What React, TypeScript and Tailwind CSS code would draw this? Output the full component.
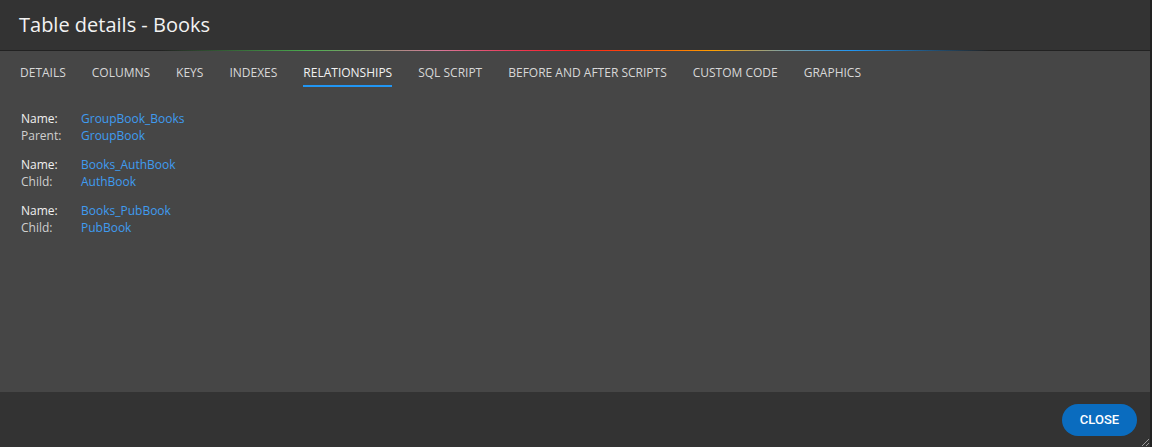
import type { ReactNode } from 'react';

const tabs = [
  'DETAILS',
  'COLUMNS',
  'KEYS',
  'INDEXES',
  'RELATIONSHIPS',
  'SQL SCRIPT',
  'BEFORE AND AFTER SCRIPTS',
  'CUSTOM CODE',
  'GRAPHICS',
];

const relations = [
  { name: 'GroupBook_Books', kind: 'Parent:', target: 'GroupBook' },
  { name: 'Books_AuthBook', kind: 'Child:', target: 'AuthBook' },
  { name: 'Books_PubBook', kind: 'Child:', target: 'PubBook' },
];

function Row({ label, children, bright }: { label: string; children: ReactNode; bright?: boolean }) {
  return (
    <div className="flex h-[17px] items-center">
      <span className={`w-[60px] ${bright ? 'text-[#f0f0f0]' : 'text-[#cfcfcf]'}`}>{label}</span>
      <span className="text-[#3f9cf0]">{children}</span>
    </div>
  );
}

export default function App() {
  return (
    <div className="flex h-[447px] w-[1152px] bg-[#222] font-['Open_Sans',sans-serif]">
      <div className="flex w-[1150px] flex-col">
        {/* Title bar */}
        <div className="flex h-[50px] items-center bg-[#333333] px-[19px]">
          <h1 className="text-[20px] leading-none text-[#f2f2f2]">Table details - Books</h1>
        </div>
        <div className="h-px bg-[linear-gradient(90deg,rgba(76,175,80,0)_14%,#4caf50_27%,#d67a9a_38%,#e84060_44%,#ff1a1a_50%,#ff6a00_58%,#ffa000_62%,#7fa0a0_68%,#2196f3_74%,rgba(33,150,243,0)_86%)]" />

        {/* Body */}
        <div className="flex flex-1 flex-col bg-[#464646]">
          <div className="flex px-[7px]">
            {tabs.map((t) => (
              <div
                key={t}
                className={`mx-[13px] border-b-2 pt-[14px] pb-[4px] text-[12px] leading-4 ${
                  t === 'RELATIONSHIPS' ? 'border-[#2196f3] text-[#f2f2f2]' : 'border-transparent text-[#d8d8d8]'
                }`}
              >
                {t}
              </div>
            ))}
          </div>

          <div className="flex flex-col gap-[12px] px-[21px] pt-[23px] text-[12px]">
            {relations.map((r) => (
              <div key={r.name}>
                <Row label="Name:" bright>
                  {r.name}
                </Row>
                <Row label={r.kind}>{r.target}</Row>
              </div>
            ))}
          </div>
        </div>

        {/* Footer */}
        <div className="relative flex h-[55px] items-start justify-end bg-[#333333] pt-[12px] pr-[13px]">
          <button className="h-[32px] w-[75px] rounded-full bg-[#0a6cbf] font-['Roboto',sans-serif] text-[13px] font-medium text-white">
            CLOSE
          </button>
          <svg className="absolute right-0 bottom-0" width="10" height="10" viewBox="0 0 10 10">
            <path d="M9 2L2 9M9 6L6 9" stroke="#9a9a9a" strokeWidth="1" />
          </svg>
        </div>
      </div>
    </div>
  );
}
